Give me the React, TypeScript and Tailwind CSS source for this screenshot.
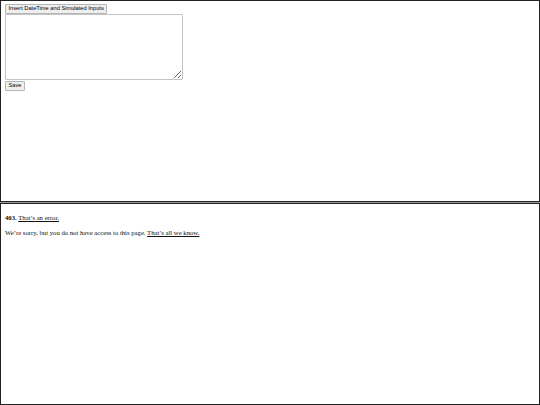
export default function App() {
  return (
    <div className="w-[540px] h-[405px] flex flex-col bg-white overflow-hidden">
      <div className="h-[202px] border border-[#222] px-[4px] pt-[3px] flex flex-col items-start">
        <button className="h-[9.5px] px-[2.5px] border border-[#b5b5b5] bg-[#efefef] rounded-[1px] text-[5.7px] leading-none text-black font-['Liberation_Sans',Arial,sans-serif]">
          Insert DateTime and Simulated Inputs
        </button>
        <textarea className="mt-[0.5px] w-[178px] h-[66px] border border-[#c4c4c4] bg-white rounded-[1px] resize-y" />
        <button className="mt-[1px] h-[9.5px] px-[2.5px] border border-[#b5b5b5] bg-[#efefef] rounded-[1px] text-[5.7px] leading-none text-black font-['Liberation_Sans',Arial,sans-serif]">
          Save
        </button>
      </div>
      <div className="h-px bg-[#9a9a9a]" />
      <div className="h-[202px] border border-[#222] px-[4px] pt-[9px] font-['Liberation_Serif','Times_New_Roman',serif] text-[6.7px] text-[#111] leading-[9px]">
        <p>
          <b>403.</b> <span className="underline decoration-[#111]">That’s an error.</span>
        </p>
        <p className="mt-[6px]">
          We’re sorry, but you do not have access to this page. <span className="underline decoration-[#111]">That’s all we know.</span>
        </p>
      </div>
    </div>
  );
}
